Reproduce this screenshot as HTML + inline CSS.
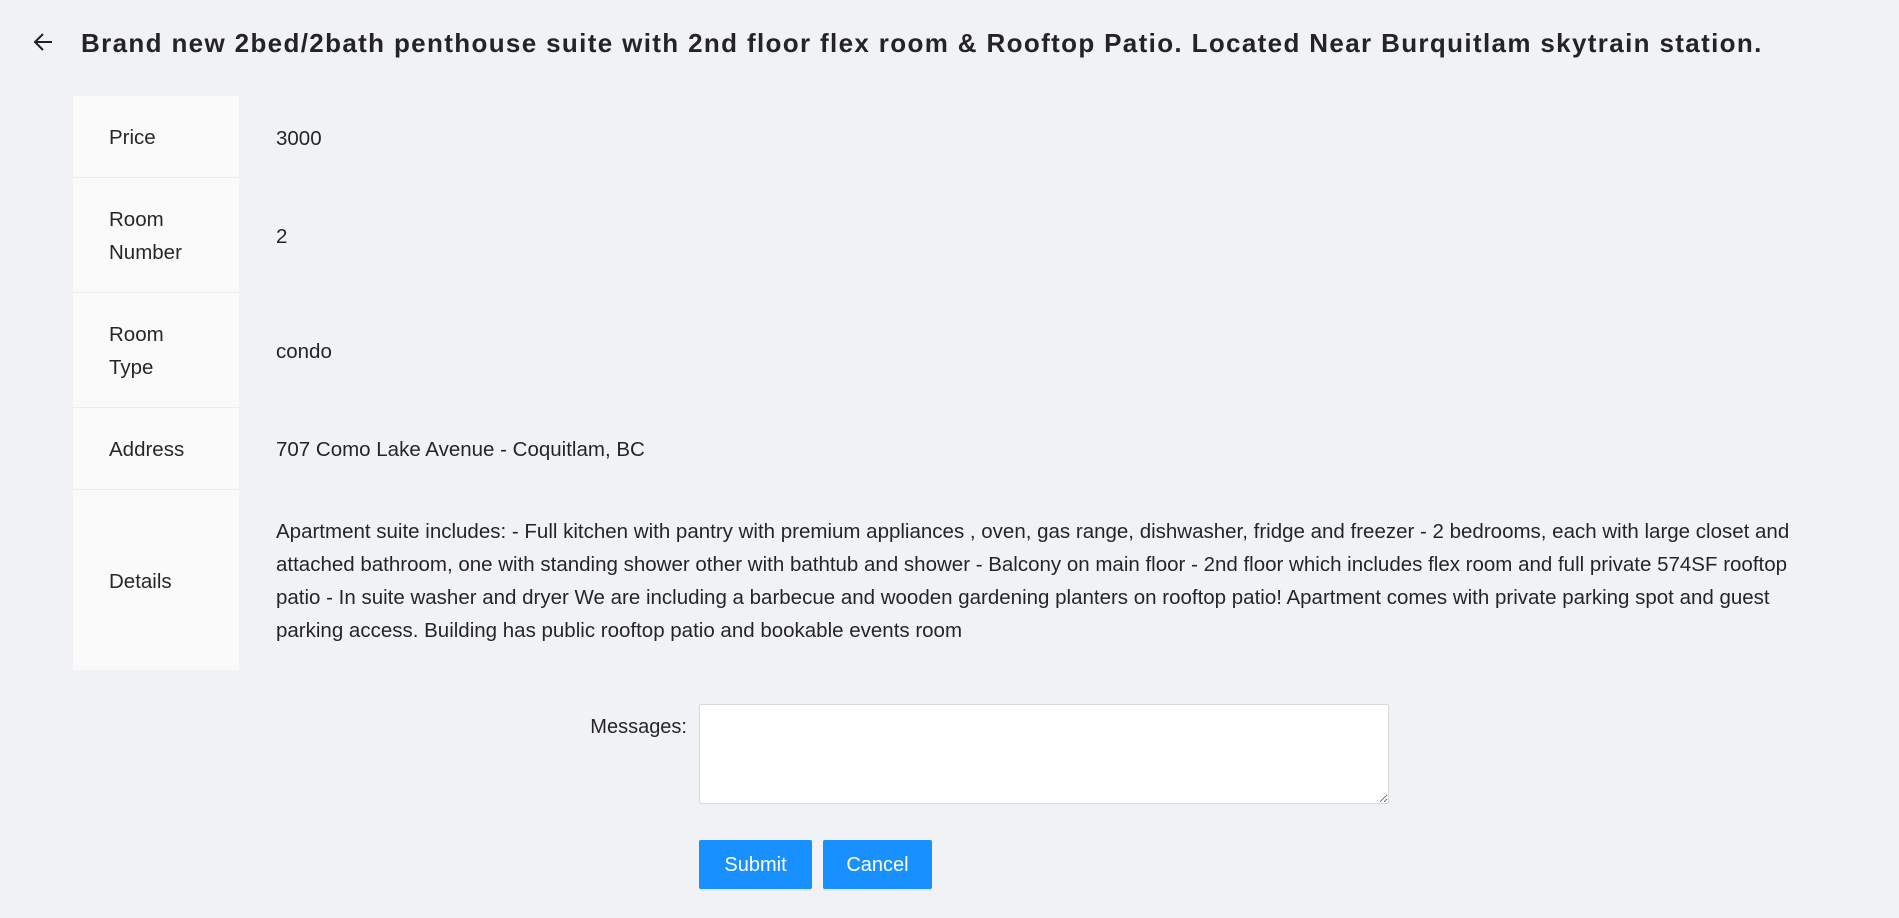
<!DOCTYPE html>
<html><head><meta charset="utf-8"><style>
*{box-sizing:border-box;margin:0;padding:0}
body{width:1899px;height:918px;background:#f0f2f5;font-family:"Liberation Sans",sans-serif;color:rgba(0,0,0,.85);position:relative;overflow:hidden}
.arrow{position:absolute;left:32px;top:31px}
h1{position:absolute;left:81px;top:28px;font-size:26px;font-weight:bold;white-space:nowrap;letter-spacing:1.35px;color:rgba(0,0,0,.85)}
table{position:absolute;left:73px;top:96px;width:1775px;border-collapse:collapse;font-size:20.5px;line-height:33px}
td{vertical-align:middle;padding-top:3px}
td.l{width:166px;background:#fafafa;padding-left:36px;padding-right:20px;border-bottom:1px solid #ececec}
td.v{padding-left:37px;padding-right:20px}
tr:last-child td{border-bottom:none}
.lab{position:absolute;right:1212px;top:716px;font-size:20px}
textarea{position:absolute;left:699px;top:704px;width:690px;height:100px;border:1px solid #d9d9d9;border-radius:2px;background:#fff;resize:both}
.btn{position:absolute;top:840px;height:49px;background:#1890ff;color:#fff;font-size:20px;line-height:51px;text-align:center;border-radius:2px;box-shadow:0 2px 0 rgba(0,0,0,.045)}
</style></head><body>
<svg class="arrow" width="22" height="22" viewBox="0 0 22 22"><path d="M20 11H3M11 3L3 11l8 8" fill="none" stroke="#222" stroke-width="2"/></svg>
<h1>Brand new 2bed/2bath penthouse suite with 2nd floor flex room &amp; Rooftop Patio. Located Near Burquitlam skytrain station.</h1>
<table>
<tr style="height:81px"><td class="l">Price</td><td class="v">3000</td></tr>
<tr style="height:115px"><td class="l">Room<br>Number</td><td class="v">2</td></tr>
<tr style="height:115px"><td class="l">Room<br>Type</td><td class="v">condo</td></tr>
<tr style="height:82px"><td class="l">Address</td><td class="v">707 Como Lake Avenue - Coquitlam, BC</td></tr>
<tr style="height:181px"><td class="l">Details</td><td class="v">Apartment suite includes: - Full kitchen with pantry with premium appliances , oven, gas range, dishwasher, fridge and freezer - 2 bedrooms, each with large closet and attached bathroom, one with standing shower other with bathtub and shower - Balcony on main floor - 2nd floor which includes flex room and full private 574SF rooftop patio - In suite washer and dryer We are including a barbecue and wooden gardening planters on rooftop patio! Apartment comes with private parking spot and guest parking access. Building has public rooftop patio and bookable events room</td></tr>
</table>
<div class="lab">Messages:</div>
<textarea></textarea>
<div class="btn" style="left:699px;width:113px">Submit</div>
<div class="btn" style="left:823px;width:109px">Cancel</div>
</body></html>
